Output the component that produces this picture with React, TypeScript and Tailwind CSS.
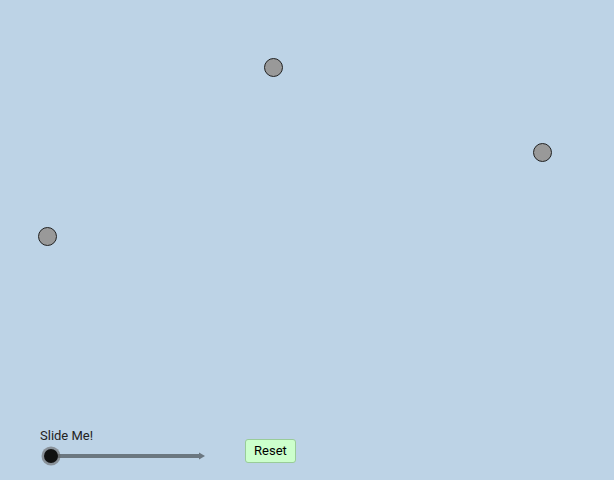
import React from "react";

const points = [
  { x: 273, y: 67 },
  { x: 542, y: 152 },
  { x: 47, y: 236 },
];

function Point({ x, y }: { x: number; y: number }) {
  return (
    <div
      className="absolute h-[19px] w-[19px] rounded-full border border-[#222] bg-[#999999]"
      style={{ left: x - 9.5, top: y - 9.5 }}
    />
  );
}

function Slider() {
  return (
    <div className="absolute left-[40px] top-[428px] flex flex-col">
      <span className="text-[13px] leading-[16px] text-[#222] [font-family:Roboto,'Liberation_Sans',sans-serif]">
        Slide Me!
      </span>
      <svg width="172" height="22" viewBox="0 0 172 22" className="mt-px">
        <line x1="11" y1="11" x2="161" y2="11" stroke="#6b7780" strokeWidth="4" />
        <polygon points="159,7.5 165,11 159,14.5" fill="#6b7780" />
        <circle cx="11" cy="11" r="9.5" fill="#666" fillOpacity="0.6" />
        <circle cx="11" cy="11" r="7" fill="#111" />
      </svg>
    </div>
  );
}

export default function App() {
  return (
    <div className="h-[480px] w-[616px] bg-white">
      <div className="relative h-[480px] w-[614px] overflow-hidden bg-[#bdd3e6]">
        {points.map((p, i) => (
          <Point key={i} x={p.x} y={p.y} />
        ))}
        <Slider />
        <button className="absolute left-[245px] top-[439px] flex h-[24px] w-[51px] items-center justify-center rounded-[3px] border border-[#99cc99] bg-[#ccffcc] text-[13px] text-black [font-family:Roboto,'Liberation_Sans',sans-serif]">
          Reset
        </button>
      </div>
    </div>
  );
}
